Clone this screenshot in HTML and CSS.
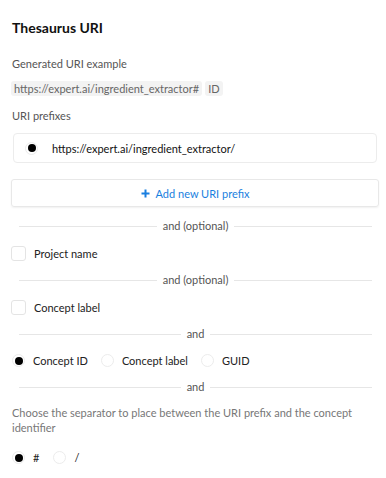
FILE: index.html
```html
<!DOCTYPE html>
<html>
<head>
<meta charset="utf-8">
<link rel="stylesheet" href="styles.css">
</head>
<body>
<div class="panel">
  <h1 class="title">Thesaurus URI</h1>
  <div class="label">Generated URI example</div>
  <div class="chips"><span class="chip">https://expert.ai/ingredient_extractor#</span><span class="chip">ID</span></div>
  <div class="label">URI prefixes</div>
  <div class="prefix-card">
    <span class="radio on"></span>
    <span class="prefix-text">https://expert.ai/ingredient_extractor/</span>
  </div>
  <div class="add-btn"><svg class="plus" width="9" height="9" viewBox="0 0 9 9"><path d="M4.5 0.5v8M0.5 4.5h8" stroke="#1a7fe0" stroke-width="2"/></svg>Add new URI prefix</div>
  <div class="divider"><span>and (optional)</span></div>
  <label class="check-row"><span class="box"></span>Project name</label>
  <div class="divider"><span>and (optional)</span></div>
  <label class="check-row"><span class="box"></span>Concept label</label>
  <div class="divider"><span>and</span></div>
  <div class="radio-row">
    <span class="opt"><span class="radio on"></span>Concept ID</span>
    <span class="opt"><span class="radio"></span>Concept label</span>
    <span class="opt"><span class="radio"></span>GUID</span>
  </div>
  <div class="divider"><span>and</span></div>
  <p class="hint">Choose the separator to place between the URI prefix and the concept identifier</p>
  <div class="radio-row sep">
    <span class="opt"><span class="radio on"></span>#</span>
    <span class="opt"><span class="radio"></span>/</span>
  </div>
</div>
</body>
</html>
```
FILE: styles.css
```css
* { box-sizing: border-box; }
body {
  margin: 0;
  background: #fff;
  font-family: Lato, "Open Sans", sans-serif;
  font-size: 11px;
  color: #222;
}
.panel {
  padding: 19px 9px 10px 12px;
}
.title {
  font-size: 14px;
  font-weight: 700;
  margin: 0 0 20px;
  color: #111;
  line-height: 18px;
}
.label {
  color: #555;
  font-size: 11px;
  line-height: 14px;
  margin-bottom: 10px;
}
.chips {
  display: flex;
  gap: 3px;
  margin-left: -1px;
  margin-bottom: 13px;
}
.chip {
  background: #f3f3f3;
  color: #666;
  border-radius: 3px;
  padding: 0 3px;
  line-height: 15px;
  font-size: 11px;
}
.prefix-card {
  margin: 0 0 0 1px;
  width: 364px;
  height: 30px;
  border: 1px solid #ececec;
  border-radius: 4px;
  display: flex;
  align-items: center;
  padding-left: 11px;
  gap: 14px;
}
.label + .prefix-card { margin-top: 0; }
.prefix-text { color: #111; }
.radio {
  width: 13px;
  height: 13px;
  border-radius: 50%;
  border: 1px solid #ececec;
  display: inline-flex;
  align-items: center;
  justify-content: center;
  flex: none;
}
.radio.on::after {
  content: "";
  width: 8px;
  height: 8px;
  border-radius: 50%;
  background: #000;
}
.add-btn {
  margin: 16px 0 0 -1px;
  width: 368px;
  height: 28px;
  border: 1px solid #e8e8e8;
  border-radius: 3px;
  box-shadow: 0 1px 2px rgba(0,0,0,0.06);
  display: flex;
  align-items: center;
  justify-content: center;
  gap: 6px;
  color: #1a7fe0;
}
.plus { flex: none; }
.divider {
  display: flex;
  align-items: center;
  gap: 6px;
  margin: 12px 5px 0 7px;
  width: 353px;
  color: #555;
  line-height: 14px;
}
.divider::before, .divider::after {
  content: "";
  flex: 1;
  border-top: 1px solid #e6e6e6;
}
.check-row {
  display: flex;
  align-items: center;
  gap: 8px;
  margin: 13px 0 0 -1px;
  height: 15px;
  color: #222;
}
.box {
  width: 15px;
  height: 15px;
  border: 1px solid #e4e4e4;
  border-radius: 3px;
  flex: none;
}
.radio-row {
  display: flex;
  align-items: center;
  gap: 13px;
  margin: 12px 0 0 0;
  height: 15px;
}
.opt {
  display: flex;
  align-items: center;
  gap: 8px;
}
.hint {
  margin: 11px 0 0 0;
  color: #777;
  line-height: 15px;
  width: 340px;
}
.radio-row.sep { margin-top: 15px; gap: 14px; }
```
